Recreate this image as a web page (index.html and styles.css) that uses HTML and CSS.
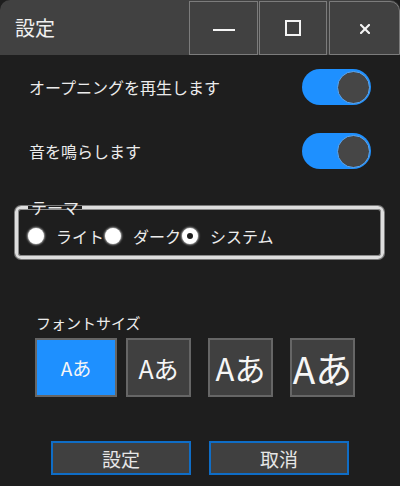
FILE: index.html
```html
<!DOCTYPE html>
<html lang="ja">
<head>
  <meta charset="UTF-8">
  <meta name="viewport" content="width=device-width, initial-scale=1.0">
  <title>設定</title>
  <link rel="stylesheet" href="styles.css">
</head>
<body>
  <div class="window">
    <div class="titlebar">
      <div class="title">設定</div>
      <div class="win-btns">
        <button class="win-btn win-min"><span class="min-line"></span></button>
        <button class="win-btn win-max"><span class="max-box"></span></button>
        <button class="win-btn win-close">
          <svg width="10" height="10" viewBox="0 0 10 10" fill="none" stroke="currentColor" stroke-width="2.2" stroke-linecap="round">
            <path d="M1 1l8 8"/>
            <path d="M9 1l-8 8"/>
          </svg>
        </button>
      </div>
    </div>

    <div class="content">
      <div class="toggle-row">
        <span class="toggle-label">オープニングを再生します</span>
        <button class="toggle on"><span class="knob"></span></button>
      </div>
      <div class="toggle-row">
        <span class="toggle-label">音を鳴らします</span>
        <button class="toggle on"><span class="knob"></span></button>
      </div>

      <fieldset class="theme">
        <legend class="theme-legend">テーマ</legend>
        <div class="radios">
          <label class="radio"><span class="dot"></span>ライト</label>
          <label class="radio"><span class="dot"></span>ダーク</label>
          <label class="radio checked"><span class="dot"></span>システム</label>
        </div>
      </fieldset>

      <div class="size-label">フォントサイズ</div>
      <div class="sizes">
        <button class="size-btn size-1 active">Aあ</button>
        <button class="size-btn size-2">Aあ</button>
        <button class="size-btn size-3">Aあ</button>
        <button class="size-btn size-4">Aあ</button>
      </div>

      <div class="actions">
        <button class="action-btn">設定</button>
        <button class="action-btn">取消</button>
      </div>
    </div>
  </div>
</body>
</html>
```

FILE: styles.css
```css
* {
  margin: 0;
  padding: 0;
  box-sizing: border-box;
  font-family: "Noto Sans CJK JP", "Noto Sans", sans-serif;
}

body {
  width: 400px;
  height: 486px;
  background: #1e1e1e;
  color: #ececec;
  overflow: hidden;
}

.titlebar {
  height: 55px;
  background: #414141;
  border-radius: 10px 10px 0 0;
  display: flex;
  overflow: hidden;
}

.title {
  flex: 1;
  padding-left: 15px;
  font-size: 20px;
  line-height: 55px;
  color: #f0f0f0;
}

.win-btns {
  display: flex;
  padding-top: 1px;
}

.win-btn {
  height: 54px;
  background: #414141;
  border: 1px solid #7c7c7c;
  color: #f4f4f4;
  display: flex;
  align-items: center;
  justify-content: center;
}

.win-min {
  width: 69px;
}

.win-max {
  width: 68px;
  margin-left: 1px;
}

.win-close {
  width: 71px;
  margin-left: 2px;
  border-top-right-radius: 10px;
}

.min-line {
  display: block;
  width: 22px;
  height: 2px;
  background: #f4f4f4;
  margin-top: 3px;
}

.max-box {
  display: block;
  width: 16px;
  height: 16px;
  border: 2px solid #f4f4f4;
}

.win-close svg {
  margin-top: 2px;
}

.content {
  padding: 14px 29px 0;
}

.toggle-row {
  height: 36px;
  display: flex;
  align-items: center;
  justify-content: space-between;
  margin-bottom: 28px;
}

.toggle-label {
  font-size: 16px;
  color: #ececec;
}

.toggle {
  width: 69px;
  height: 36px;
  border: none;
  border-radius: 18px;
  background: #1e90ff;
  display: flex;
  align-items: center;
  justify-content: flex-end;
  padding-right: 1px;
}

.knob {
  width: 33px;
  height: 33px;
  border-radius: 50%;
  background: #464646;
  border: 1px solid #5aa8f5;
}

.theme {
  margin: 2px -13px 0 -14px;
  border: 3px solid #dedede;
  border-radius: 6px;
  box-shadow: 0 0 0 1px #7a7a7a, inset 0 0 0 1px #8c8c8c;
  padding: 9px 10px 10px;
}

.theme-legend {
  font-size: 16px;
  line-height: 20px;
  padding: 0 3px;
  color: #ececec;
}

.radios {
  display: flex;
  align-items: center;
  height: 20px;
  gap: 1px;
}

.radio {
  display: flex;
  align-items: center;
  gap: 12px;
  font-size: 16px;
  color: #ececec;
}

.dot {
  width: 16px;
  height: 16px;
  border-radius: 50%;
  background: #ffffff;
  box-shadow: 0 0 2px 1px rgba(255, 255, 255, 0.6);
}

.radio.checked .dot {
  background: #1e1e1e;
  border: 5px solid #ffffff;
}

.size-label {
  margin: 54px 0 0 7px;
  font-size: 15px;
  line-height: 20px;
  color: #ececec;
}

.sizes {
  display: flex;
  margin: 5px 0 0 6px;
}

.size-btn {
  width: 65px;
  height: 59px;
  background: #404040;
  border: 2px solid #666666;
  color: #f6f6f6;
  display: flex;
  align-items: center;
  justify-content: center;
  margin-left: 17px;
}

.size-btn.size-1 {
  width: 82px;
  margin-left: 0;
  font-size: 19px;
}

.size-btn.size-2 {
  margin-left: 9px;
  font-size: 25px;
}

.size-3 {
  font-size: 31px;
}

.size-4 {
  font-size: 37px;
}

.size-btn.active {
  background: #1e90ff;
}

.actions {
  display: flex;
  gap: 18px;
  margin: 44px 0 0 22px;
}

.action-btn {
  width: 140px;
  height: 34px;
  background: #404040;
  border: 2px solid #0f6dc6;
  color: #e6e6e6;
  font-size: 19px;
  line-height: 1;
}
```
